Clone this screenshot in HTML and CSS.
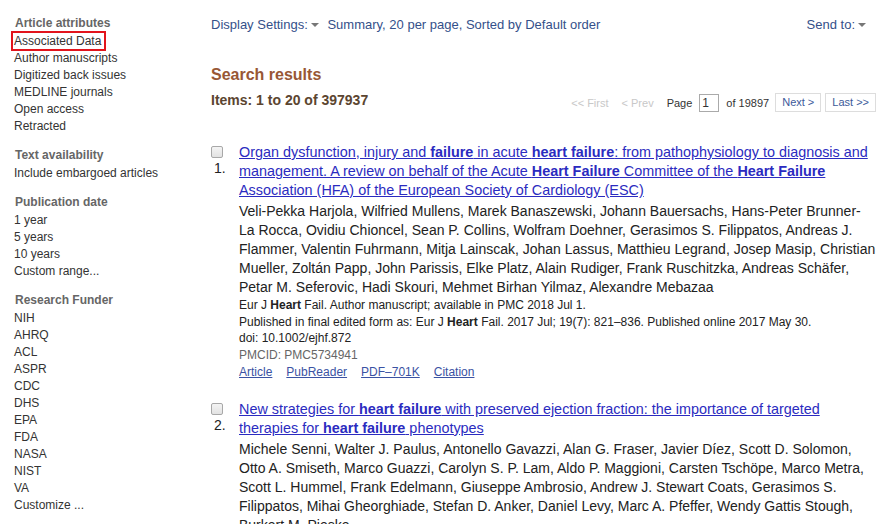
FILE: index.html
```html
<!DOCTYPE html>
<html>
<head>
<meta charset="utf-8">
<link rel="stylesheet" href="styles.css">
</head>
<body>
<div class="page">
  <aside class="sidebar">
    <section class="facet">
      <h3 class="facet-title">Article attributes</h3>
      <ul class="facet-list">
        <li><span class="marked">Associated Data</span></li>
        <li>Author manuscripts</li>
        <li>Digitized back issues</li>
        <li>MEDLINE journals</li>
        <li>Open access</li>
        <li>Retracted</li>
      </ul>
    </section>
    <section class="facet">
      <h3 class="facet-title">Text availability</h3>
      <ul class="facet-list">
        <li>Include embargoed articles</li>
      </ul>
    </section>
    <section class="facet">
      <h3 class="facet-title">Publication date</h3>
      <ul class="facet-list">
        <li>1 year</li>
        <li>5 years</li>
        <li>10 years</li>
        <li>Custom range...</li>
      </ul>
    </section>
    <section class="facet">
      <h3 class="facet-title">Research Funder</h3>
      <ul class="facet-list">
        <li>NIH</li>
        <li>AHRQ</li>
        <li>ACL</li>
        <li>ASPR</li>
        <li>CDC</li>
        <li>DHS</li>
        <li>EPA</li>
        <li>FDA</li>
        <li>NASA</li>
        <li>NIST</li>
        <li>VA</li>
        <li>Customize ...</li>
      </ul>
    </section>
  </aside>

  <main class="main">
    <div class="topbar">
      <div class="display">
        <span class="ds-label">Display Settings:</span><span class="caret"></span>
        <span class="ds-value">Summary, 20 per page, Sorted by Default order</span>
      </div>
      <div class="sendto">Send to:<span class="caret"></span></div>
    </div>

    <h2 class="results-title">Search results</h2>
    <div class="countrow">
      <div class="count">Items: 1 to 20 of 397937</div>
      <div class="pager">
        <span class="pg-dis">&lt;&lt; First</span>
        <span class="pg-dis">&lt; Prev</span>
        <span class="pg-page">Page</span>
        <span class="pg-input">1</span>
        <span class="pg-of">of 19897</span>
        <span class="pg-btn">Next &gt;</span>
        <span class="pg-btn">Last &gt;&gt;</span>
      </div>
    </div>

    <div class="result">
      <div class="rleft">
        <span class="cbox"></span>
        <span class="rnum">1.</span>
      </div>
      <div class="rbody">
        <p class="rtitle"><a href="#">Organ dysfunction, injury and <b>failure</b> in acute <b>heart failure</b>: from pathophysiology to diagnosis and management. A review on behalf of the Acute <b>Heart Failure</b> Committee of the <b>Heart Failure</b> Association (HFA) of the European Society of Cardiology (ESC)</a></p>
        <p class="authors">Veli-Pekka Harjola, Wilfried Mullens, Marek Banaszewski, Johann Bauersachs, Hans-Peter Brunner-La Rocca, Ovidiu Chioncel, Sean P. Collins, Wolfram Doehner, Gerasimos S. Filippatos, Andreas J. Flammer, Valentin Fuhrmann, Mitja Lainscak, Johan Lassus, Matthieu Legrand, Josep Masip, Christian Mueller, Zoltán Papp, John Parissis, Elke Platz, Alain Rudiger, Frank Ruschitzka, Andreas Schäfer, Petar M. Seferovic, Hadi Skouri, Mehmet Birhan Yilmaz, Alexandre Mebazaa</p>
        <p class="src">Eur J <b>Heart</b> Fail. Author manuscript; available in PMC 2018 Jul 1.</p>
        <p class="src">Published in final edited form as: Eur J <b>Heart</b> Fail. 2017 Jul; 19(7): 821–836. Published online 2017 May 30.</p>
        <p class="src">doi: 10.1002/ejhf.872</p>
        <p class="pmcid">PMCID: PMC5734941</p>
        <p class="links"><a href="#">Article</a><a href="#">PubReader</a><a href="#">PDF–701K</a><a href="#">Citation</a></p>
      </div>
    </div>

    <div class="result">
      <div class="rleft">
        <span class="cbox"></span>
        <span class="rnum">2.</span>
      </div>
      <div class="rbody">
        <p class="rtitle"><a href="#">New strategies for <b>heart failure</b> with preserved ejection fraction: the importance of targeted therapies for <b>heart failure</b> phenotypes</a></p>
        <p class="authors">Michele Senni, Walter J. Paulus, Antonello Gavazzi, Alan G. Fraser, Javier Díez, Scott D. Solomon, Otto A. Smiseth, Marco Guazzi, Carolyn S. P. Lam, Aldo P. Maggioni, Carsten Tschöpe, Marco Metra, Scott L. Hummel, Frank Edelmann, Giuseppe Ambrosio, Andrew J. Stewart Coats, Gerasimos S. Filippatos, Mihai Gheorghiade, Stefan D. Anker, Daniel Levy, Marc A. Pfeffer, Wendy Gattis Stough, Burkert M. Pieske</p>
        <p class="src">Eur <b>Heart</b> J. 2014 Oct 21; 35(40): 2797–2815.</p>
      </div>
    </div>
  </main>
</div>
</body>
</html>
```

FILE: styles.css
```css
html, body {
  margin: 0;
  padding: 0;
  background: #fff;
  overflow: hidden;
}
body {
  font-family: "Liberation Sans", Arial, sans-serif;
  color: #222;
}
p, h2, h3, ul {
  margin: 0;
  padding: 0;
}
.page {
  display: flex;
  align-items: flex-start;
}

/* sidebar */
.sidebar {
  width: 197px;
  flex: none;
  padding: 14px 0 0 14px;
}
.facet {
  margin-bottom: 11px;
}
.facet-title {
  font-size: 12px;
  font-weight: bold;
  color: #666;
  line-height: 18px;
  padding-left: 1px;
  padding-bottom: 1px;
}
.facet-list {
  list-style: none;
  font-size: 12px;
  line-height: 17px;
  color: #333;
}
.marked {
  outline: 2px solid #e2141c;
  outline-offset: 1px;
  padding-right: 2px;
}

/* main */
.main {
  flex: 1;
  min-width: 0;
  padding: 16px 5px 0 0;
}
.topbar {
  display: flex;
  justify-content: space-between;
  font-size: 13px;
  line-height: 18px;
  color: #34508a;
  padding-right: 10px;
}
.caret {
  display: inline-block;
  width: 0;
  height: 0;
  border-left: 4px solid transparent;
  border-right: 4px solid transparent;
  border-top: 4px solid #777;
  margin-left: 3px;
  vertical-align: 2px;
}
.ds-value {
  margin-left: 5px;
}
.results-title {
  margin-top: 31px;
  font-size: 16px;
  line-height: 20px;
  color: #985735;
  font-weight: bold;
}
.countrow {
  display: flex;
  justify-content: space-between;
  align-items: center;
  margin-top: 8px;
}
.count {
  font-size: 14px;
  font-weight: bold;
  color: #5b4530;
  line-height: 16px;
  margin-top: -6px;
}
.pager {
  display: flex;
  align-items: center;
  font-size: 11px;
  color: #333;
}
.pg-dis {
  color: #c8c8c8;
  margin-right: 13px;
}
.pg-page {
  margin-right: 7px;
}
.pg-input {
  display: inline-block;
  width: 16px;
  height: 16px;
  line-height: 16px;
  border: 1px solid #aaa;
  padding-left: 2px;
  font-size: 12px;
  margin-right: 7px;
}
.pg-of {
  margin-right: 2px;
}
.pg-btn {
  color: #3c5a9a;
  border: 1px solid #ddd;
  padding: 2px 6px;
  line-height: 13px;
  margin-left: 4px;
}

/* results */
.result {
  display: flex;
  margin-top: 31px;
}
.result + .result {
  margin-top: 19px;
}
.rleft {
  width: 28px;
  flex: none;
  display: flex;
  flex-direction: column;
}
.cbox {
  width: 10px;
  height: 10px;
  border: 1px solid #a8a8a8;
  border-radius: 2px;
  background: linear-gradient(#f4f4f4, #e2e2e2);
  margin: 3px 0 0 0;
}
.rnum {
  font-size: 14px;
  line-height: 19px;
  margin: 1px 0 0 3px;
  color: #222;
}
.rbody {
  flex: 1;
  min-width: 0;
}
.rtitle {
  font-size: 14.4px;
  line-height: 19px;
  margin-bottom: 2px;
}
.rtitle a {
  color: #2b2bc0;
  text-decoration: underline;
}
.authors {
  font-size: 14px;
  line-height: 19px;
  color: #222;
}
.src {
  font-size: 12px;
  line-height: 16.7px;
  color: #222;
}
.pmcid {
  font-size: 12px;
  line-height: 16.7px;
  color: #666;
}
.links {
  font-size: 12px;
  line-height: 16.7px;
}
.links a {
  color: #3a52a3;
  text-decoration: underline;
  margin-right: 14px;
}
```
